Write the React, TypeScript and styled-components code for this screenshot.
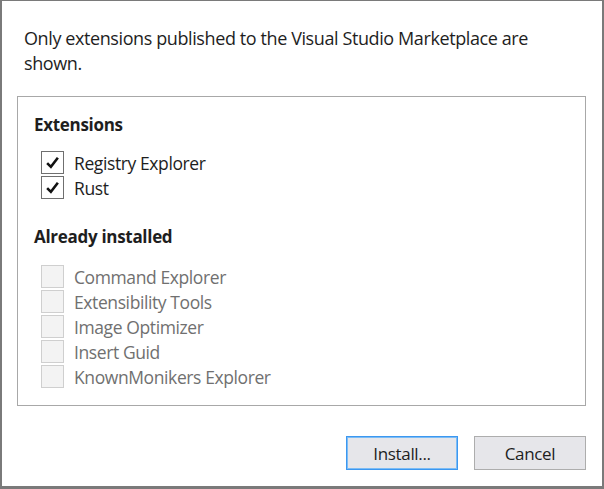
import React from 'react';
import styled, { createGlobalStyle } from 'styled-components';

const GlobalStyle = createGlobalStyle`
  html, body {
    margin: 0;
    padding: 0;
    background: #ffffff;
  }
  * {
    box-sizing: border-box;
  }
`;

const Dialog = styled.div`
  width: 604px;
  height: 489px;
  background: #ffffff;
  border-style: solid;
  border-color: #7a7a7a;
  border-width: 1px 2px 3px 2px;
  display: flex;
  flex-direction: column;
  font-family: 'Open Sans', 'Noto Sans', sans-serif;
  color: #1e1e1e;
`;

const Notice = styled.p`
  margin: 0;
  padding: 25px 40px 0 22px;
  font-size: 18px;
  line-height: 25px;
  letter-spacing: -0.4px;
`;

const Panel = styled.div`
  margin: 20px 16px 0 15px;
  height: 310px;
  border: 1px solid #a8a8a8;
  padding: 16px 16px 0 16px;
`;

const GroupTitle = styled.h3`
  margin: 0;
  font-size: 17px;
  line-height: 24px;
  font-weight: 700;
  letter-spacing: -0.3px;
  color: #1e1e1e;
`;

const List = styled.div<{ $disabled?: boolean }>`
  display: flex;
  flex-direction: column;
  padding: ${p => (p.$disabled ? '15px' : '13px')} 0 0 7px;
  margin-bottom: 25px;
`;

const Row = styled.label<{ $disabled?: boolean }>`
  display: flex;
  align-items: center;
  gap: 10px;
  height: 25px;
  font-size: 17.5px;
  letter-spacing: -0.4px;
  color: ${p => (p.$disabled ? '#707070' : '#1e1e1e')};
`;

const Box = styled.span<{ $disabled?: boolean }>`
  width: 23px;
  height: 23px;
  flex: none;
  display: flex;
  align-items: center;
  justify-content: center;
  border: 1px solid ${p => (p.$disabled ? '#cfcfcf' : '#6f6f6f')};
  background: ${p => (p.$disabled ? '#f3f3f3' : '#ffffff')};
`;

const Footer = styled.div`
  display: flex;
  justify-content: flex-end;
  gap: 16px;
  padding: 30px 16px 0 0;
`;

const Button = styled.button<{ $primary?: boolean }>`
  width: 112px;
  height: 34px;
  font-family: 'Open Sans', 'Noto Sans', sans-serif;
  font-size: 17px;
  letter-spacing: -0.35px;
  color: #1e1e1e;
  background: #e6e6ea;
  border: 1px solid ${p => (p.$primary ? '#3c97f0' : '#adadad')};
  box-shadow: ${p => (p.$primary ? 'inset 0 0 0 1px #7cbcf5' : 'none')};
  padding: 0;
`;

const Check = () => (
  <svg width="15" height="15" viewBox="0 0 14 14">
    <path d="M2 7.5 L5.5 11 L12 2.5" fill="none" stroke="#111" strokeWidth="2.4" />
  </svg>
);

const extensions = ['Registry Explorer', 'Rust'];
const installed = [
  'Command Explorer',
  'Extensibility Tools',
  'Image Optimizer',
  'Insert Guid',
  'KnownMonikers Explorer',
];

export default function App() {
  return (
    <>
      <GlobalStyle />
      <Dialog>
        <Notice>Only extensions published to the Visual Studio Marketplace are shown.</Notice>
        <Panel>
          <GroupTitle>Extensions</GroupTitle>
          <List>
            {extensions.map(name => (
              <Row key={name}>
                <Box>
                  <Check />
                </Box>
                {name}
              </Row>
            ))}
          </List>
          <GroupTitle>Already installed</GroupTitle>
          <List $disabled>
            {installed.map(name => (
              <Row key={name} $disabled>
                <Box $disabled />
                {name}
              </Row>
            ))}
          </List>
        </Panel>
        <Footer>
          <Button $primary>Install...</Button>
          <Button>Cancel</Button>
        </Footer>
      </Dialog>
    </>
  );
}
